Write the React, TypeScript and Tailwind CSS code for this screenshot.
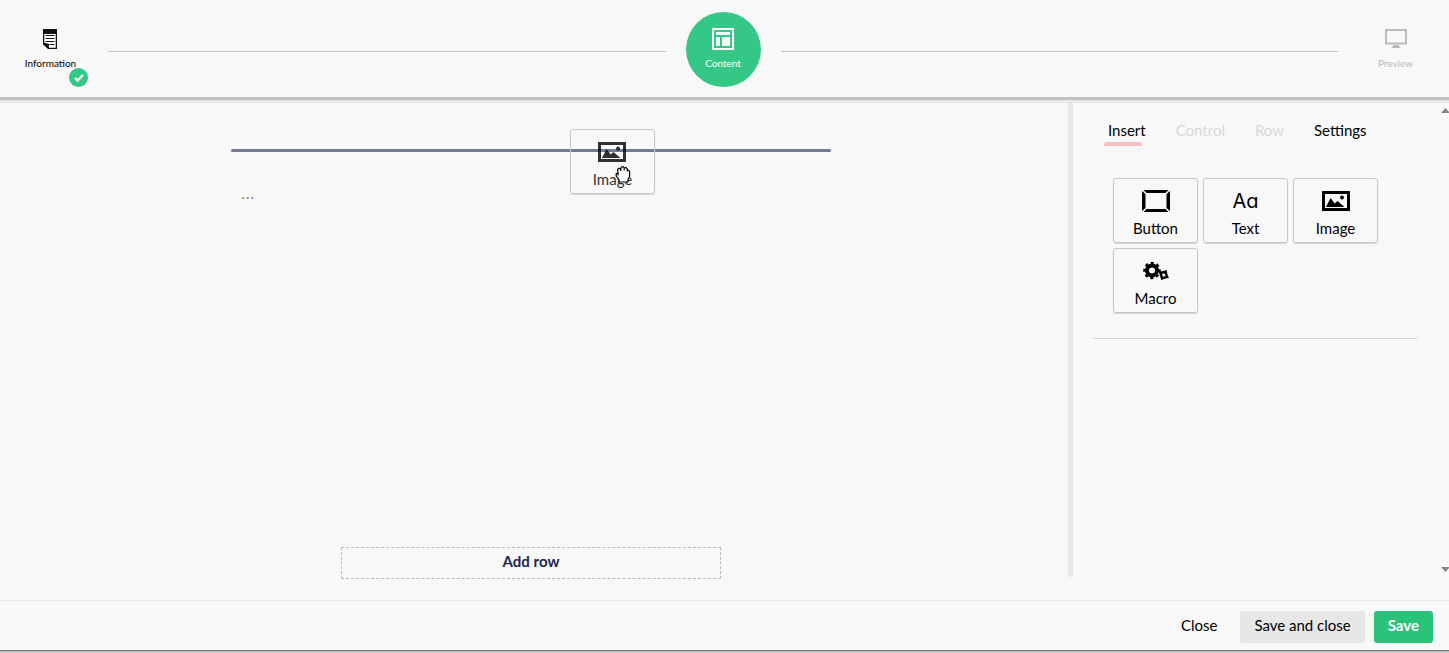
import type { ReactNode } from 'react';

function DocumentIcon() {
  return (
    <svg width="16" height="20" viewBox="0 0 16 20" aria-hidden="true">
      <path d="M0 0h14v20H5L0 15.5z" fill="#111" />
      <path d="M1.300 5h11.400v13.700H6V15L1.300 13.800z" fill="#fff" />
      <path d="M2.500 6.500h9M2.500 9.500h9M2.500 12.500h9M6.500 15.500h5" stroke="#111" strokeWidth="1.200" />
    </svg>
  );
}

function LayoutIcon() {
  return (
    <svg width="22" height="22" viewBox="0 0 22 22" fill="none" aria-hidden="true">
      <path d="M1 1h20v20H1z" stroke="#fff" strokeWidth="2" />
      <path d="M4 4h14v3H4zM4 9h4v9H4zM10 9h8v9h-8z" fill="#f3f9f6" />
    </svg>
  );
}

function MonitorIcon() {
  return (
    <svg width="22" height="20" viewBox="0 0 22 20" aria-hidden="true">
      <path d="M1 1h20v13.500H1z" fill="none" stroke="#bbbabf" strokeWidth="2" />
      <path d="M8.500 16h5l2 3h-9z" fill="#bbbabf" />
    </svg>
  );
}

function ButtonIcon() {
  return (
    <svg width="28" height="22" viewBox="0 0 28 22" aria-hidden="true">
      <path d="M1.500 0h25l-3 3h-19zM1.500 22h25l-3-3h-19zM0 1l3.500 3v14L0 21zM28 1l-3.500 3v14l3.500 3z" fill="#000" />
    </svg>
  );
}

function ImageIcon() {
  return (
    <svg width="28" height="20" viewBox="0 0 28 20" aria-hidden="true">
      <path d="M1.500 1.500h25v17h-25z" fill="none" stroke="#000" strokeWidth="3" />
      <path d="M4 16l4.500-9 4.200 5.500L15.500 10l7 6z" fill="#000" />
      <circle cx="20" cy="6.500" r="2" fill="#000" />
    </svg>
  );
}

function GearsIcon() {
  return (
    <svg width="26" height="18" viewBox="0 0 26 18" fill="none" stroke="#000" aria-hidden="true">
      <circle cx="9" cy="8.500" r="5" strokeWidth="4" />
      <circle cx="9" cy="8.500" r="7.500" strokeWidth="2.500" strokeDasharray="3 2.890" strokeDashoffset="1.500" />
      <path d="M17.500 11l5-1.200 1.500 5-5 1.400z" strokeWidth="2.400" />
      <path d="M17 9.500l1 2M23 8.500l-.5 2M25.500 15.500l-2-.5M18.500 17.500l1-2" strokeWidth="1.800" />
    </svg>
  );
}

function GrabCursor() {
  return (
    <svg width="16" height="17" viewBox="0 0 16 17" aria-hidden="true">
      <path
        d="M4 16v-2.500L1.200 10V7.500L3 7.200 2.600 3.500 4 2.200l1.600.8L6.500.8h2l.8 1.400 1.700-.7 1.300 1.300.2 1.200 1.300.3.800 1.200v5L13 13.500V16z"
        fill="#fff"
        stroke="#000"
        strokeWidth="1.200"
        strokeLinejoin="round"
      />
      <path d="M3 7.200V9.500M5.800 3v2M9.200 2.500v2M12.300 3.500v2" stroke="#000" strokeWidth="1.200" />
    </svg>
  );
}

const tools: { label: string; icon: ReactNode }[] = [
  { label: 'Button', icon: <ButtonIcon /> },
  {
    label: 'Text',
    icon: (
      <span className="font-['Inter',sans-serif] text-xl leading-5 [font-feature-settings:'cv11']">
        Aa
      </span>
    ),
  },
  { label: 'Image', icon: <ImageIcon /> },
  { label: 'Macro', icon: <GearsIcon /> },
];

const tabs = [
  { label: 'Insert', active: true, disabled: false },
  { label: 'Control', active: false, disabled: true },
  { label: 'Row', active: false, disabled: true },
  { label: 'Settings', active: false, disabled: false },
];

const tileClass =
  'flex h-[65px] w-[85px] flex-col items-center rounded-[3px] border border-[#c8c8ca] pt-[10px] text-[15px] leading-5 shadow-[0_1px_1px_#d4d4d4]';

function TileContent({ label, icon }: { label: string; icon: ReactNode }) {
  return (
    <>
      <span className="flex h-6 items-center justify-center">{icon}</span>
      <span className="mt-[5px]">{label}</span>
    </>
  );
}

function Steps() {
  const stepClass = 'relative flex size-[75px] shrink-0 flex-col items-center pt-4 text-[10px] leading-3';

  return (
    <header className="border-b-[3px] border-[#e7e7e7]">
      <nav
        aria-label="Steps"
        className="flex h-[100px] items-start border-b-[3px] border-[#c0c0c0] pt-3 pr-4 pl-[13px]"
      >
        <button className={stepClass}>
          <span className="flex h-[22px] items-center">
            <DocumentIcon />
          </span>
          <span className="mt-[7px]">Information</span>
          <span className="absolute right-0 bottom-0 flex size-[19px] items-center justify-center rounded-full bg-[#35c786]">
            <svg width="10" height="8" viewBox="0 0 10 8" aria-hidden="true">
              <path d="M1 4.200l2.600 2.300L9 1" fill="none" stroke="#fff" strokeWidth="2.400" />
            </svg>
          </span>
        </button>
        <div className="mx-5 mt-[39px] h-px flex-1 bg-[#c4c4c4]" />
        <button className={`${stepClass} rounded-full bg-[#35c786] text-white`} aria-current="step">
          <LayoutIcon />
          <span className="mt-[7px]">Content</span>
        </button>
        <div className="mx-5 mt-[39px] h-px flex-1 bg-[#c4c4c4]" />
        <button className={`${stepClass} text-[#bbbabf]`} disabled>
          <span className="flex h-[22px] items-center">
            <MonitorIcon />
          </span>
          <span className="mt-[7px]">Preview</span>
        </button>
      </nav>
    </header>
  );
}

function Canvas() {
  return (
    <section className="flex flex-1 flex-col items-center pt-[46px] pr-[6px] pb-[21px]">
      <div className="relative w-[600px] max-w-full">
        <div className="h-[3px] rounded-sm bg-[#737b96]" />
        <p className="px-[10px] pt-8 font-['DejaVu_Sans',sans-serif] text-sm leading-5 text-[#8a6a4a]">...</p>
        <div className={`${tileClass} absolute -top-5 left-[339px]`}>
          <span className="flex flex-col items-center opacity-80">
            <TileContent label="Image" icon={<ImageIcon />} />
          </span>
          <span className="absolute top-9 left-11">
            <GrabCursor />
          </span>
        </div>
      </div>
      <button className="mt-auto h-8 w-[380px] max-w-full border border-dashed border-[#bbbabf] pb-1 text-[15px] leading-5 font-bold text-[#1b264f]">
        Add row
      </button>
    </section>
  );
}

function Sidebar() {
  return (
    <aside className="flex w-[376px] shrink-0 justify-between">
      <div className="flex-1 pt-[17px] pl-5">
        <div role="tablist" className="flex gap-[30px] pl-[15px] text-[15px] leading-5">
          {tabs.map((tab) => (
            <button
              key={tab.label}
              role="tab"
              aria-selected={tab.active}
              disabled={tab.disabled}
              className={`relative pb-[6px] ${tab.disabled ? 'text-[#d8d7d9]' : 'text-black'}`}
            >
              {tab.label}
              {tab.active && (
                <span className="absolute bottom-0 -left-1 h-1 w-full rounded-t-[3px] bg-[#f5c1bc]" />
              )}
            </button>
          ))}
        </div>
        <div className="mt-8 flex flex-wrap gap-[5px] rounded-[3px] border-b border-[#d0d0d2] px-5 pb-[25px]">
          {tools.map((tool) => (
            <button key={tool.label} className={tileClass}>
              <TileContent label={tool.label} icon={tool.icon} />
            </button>
          ))}
        </div>
      </div>
      <div className="ml-[23px] flex w-2 flex-col justify-between pt-[5px] pb-7">
        <svg width="8" height="5" viewBox="0 0 8 5" aria-hidden="true">
          <path d="M0 5L4.500 0 9 5z" fill="#858585" />
        </svg>
        <svg width="8" height="5" viewBox="0 0 8 5" aria-hidden="true">
          <path d="M0 0h9L4.500 5z" fill="#858585" />
        </svg>
      </div>
    </aside>
  );
}

export default function App() {
  return (
    <div className="flex min-h-screen flex-col bg-[#f8f8f8] font-['Lato',sans-serif] text-black">
      <Steps />
      <main className="flex flex-1">
        <Canvas />
        <div className="mb-[23px] w-[5px] rounded-b-sm bg-[#e8e8e8]" />
        <Sidebar />
      </main>
      <footer className="border-b-2 border-[#c4c4c4]">
        <div className="flex justify-end gap-[9px] border-t border-b border-t-[#e7e7e7] border-b-[#737373] pt-[10px] pr-4 pb-[7px] text-[15px] leading-5">
          <button className="h-8 rounded-[3px] px-[14px] pb-1">Close</button>
          <button className="h-8 rounded-[3px] bg-[#e8e7e8] px-[14px] pb-1">Save and close</button>
          <button className="h-8 rounded-[3px] bg-[#2bc37c] px-[14px] pb-1 font-bold text-white">
            Save
          </button>
        </div>
      </footer>
    </div>
  );
}
